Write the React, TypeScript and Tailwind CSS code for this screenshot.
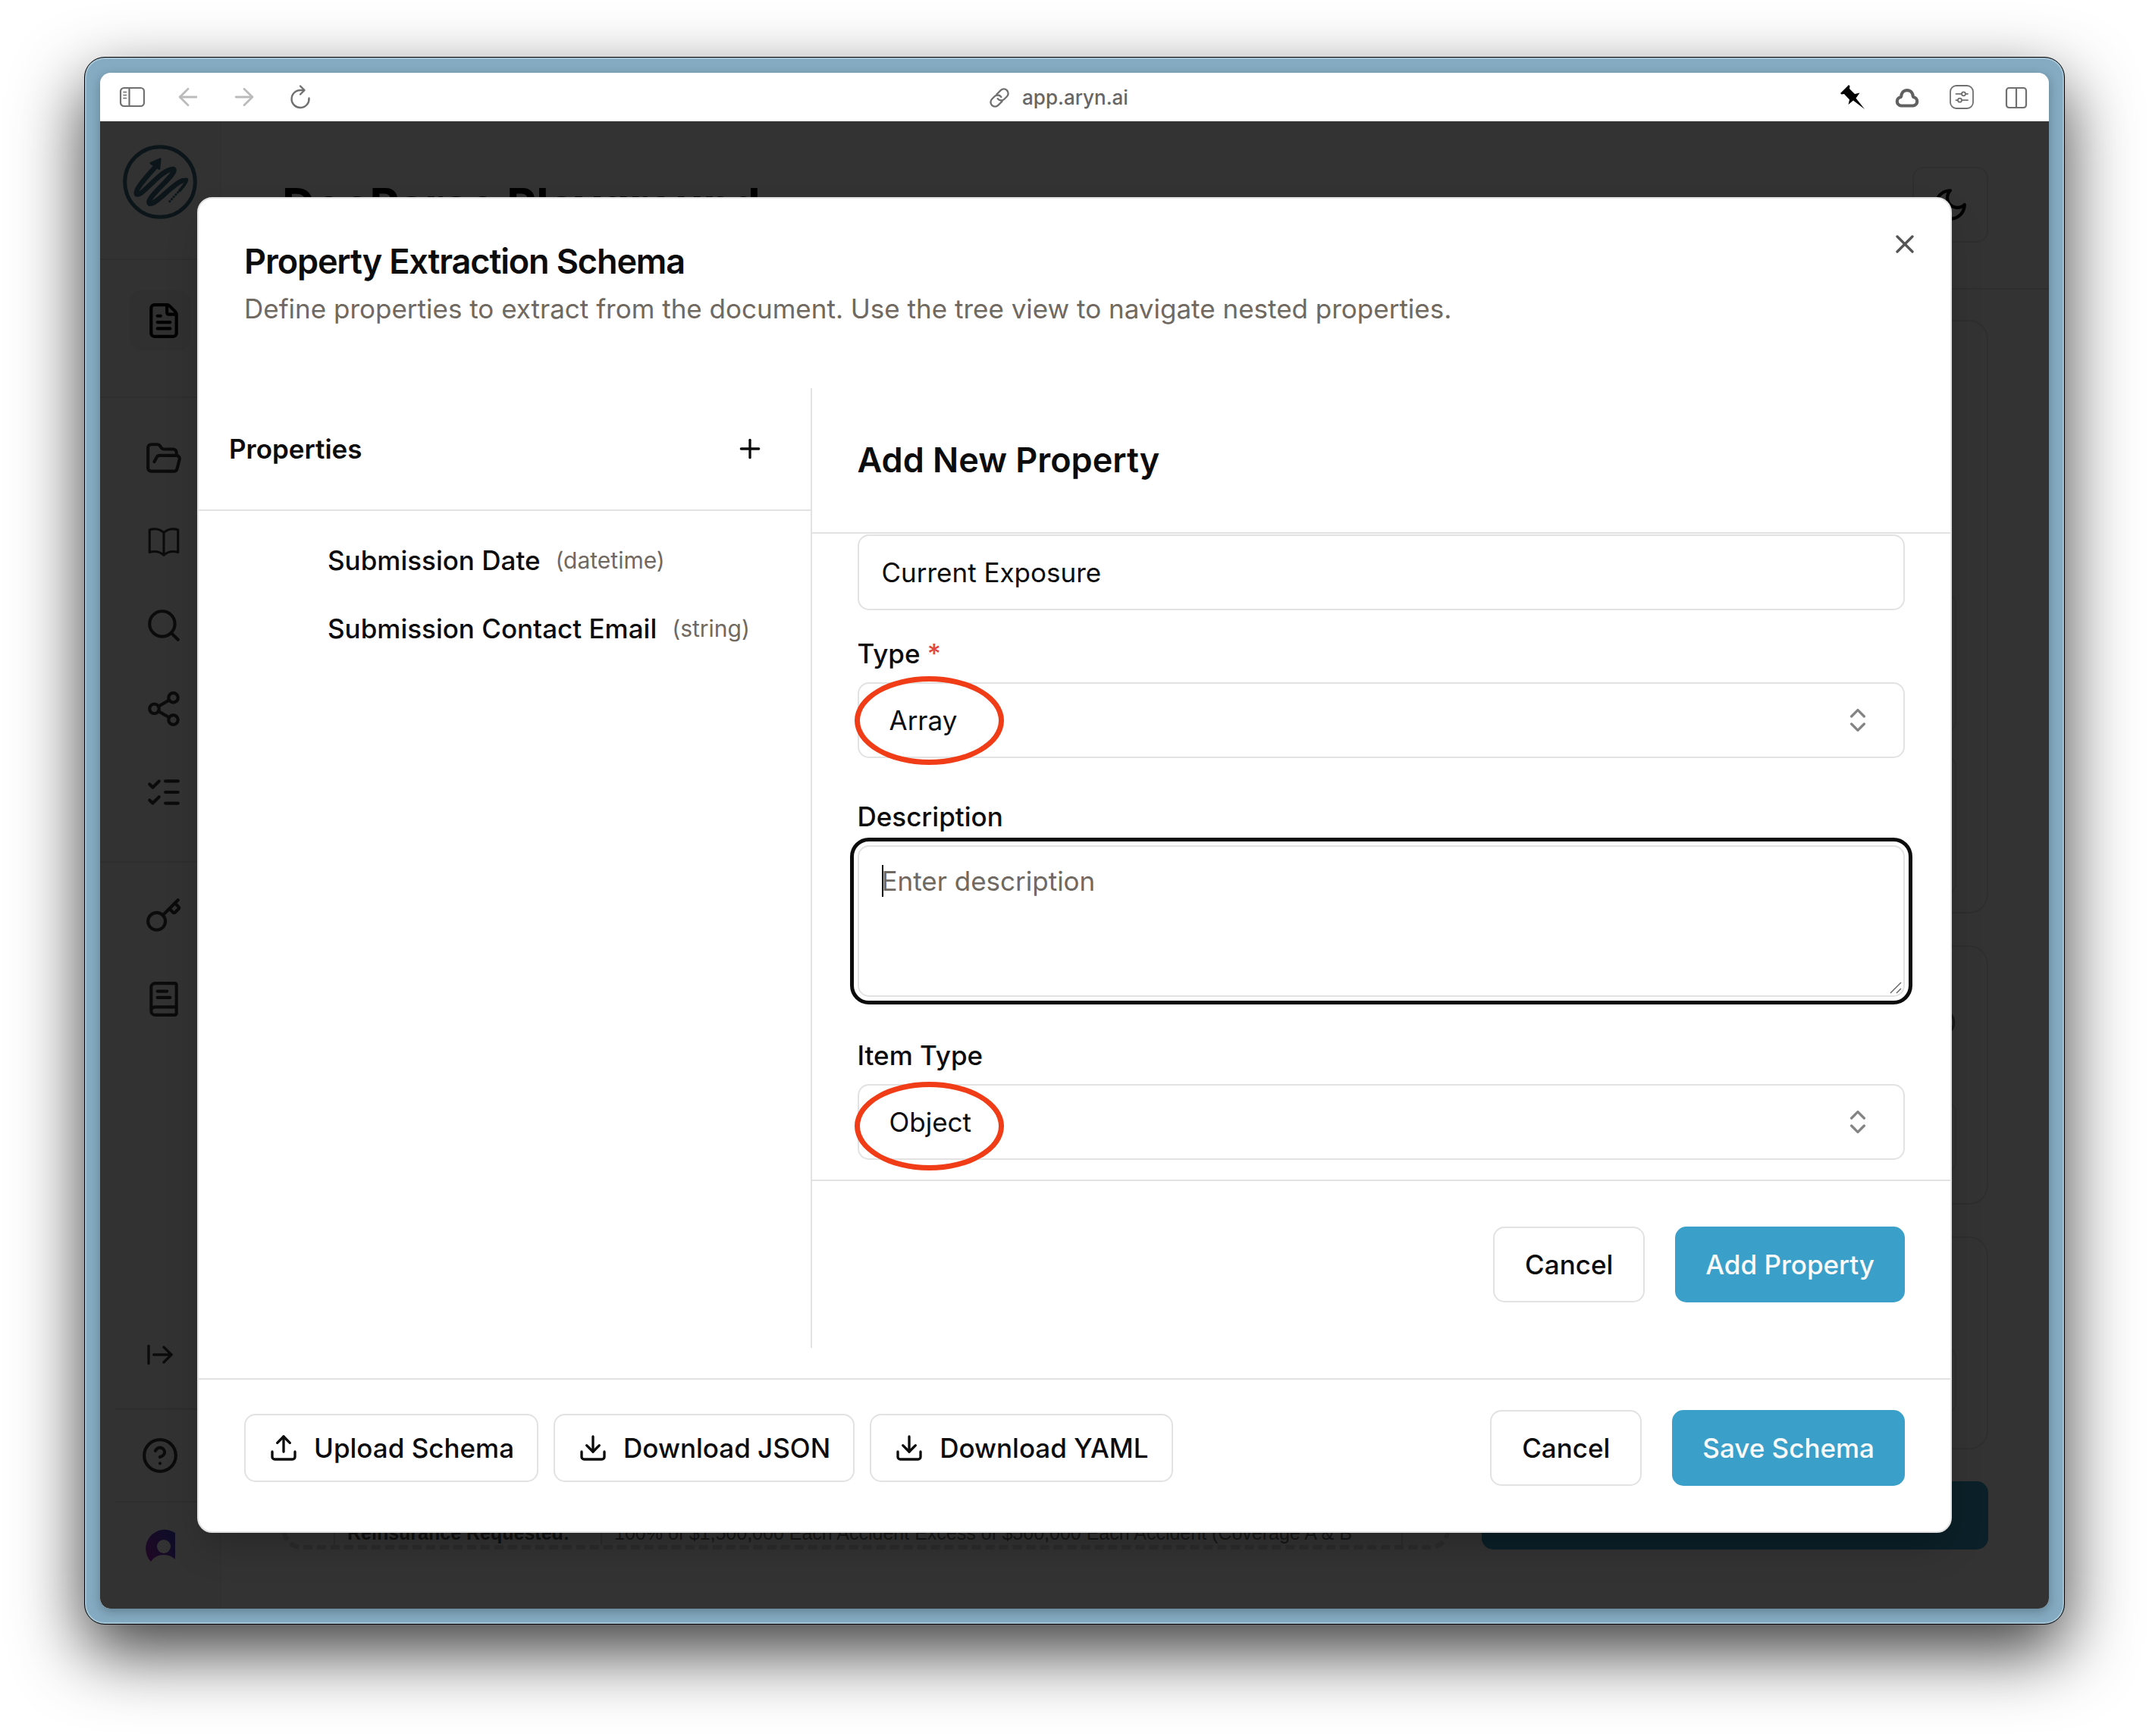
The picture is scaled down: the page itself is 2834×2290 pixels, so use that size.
import type { ReactNode } from "react";
import {
  ArrowLeft,
  ArrowRight,
  ArrowRightFromLine,
  BookText,
  ChevronsUpDown,
  CircleQuestionMark,
  Download,
  FileText,
  FolderOpen,
  Info,
  Key,
  ListChecks,
  Plus,
  Search,
  Share2,
  Upload,
  X,
} from "lucide-react";

const properties = [
  { name: "Submission Date", type: "(datetime)" },
  { name: "Submission Contact Email", type: "(string)" },
];

function BookOpenIcon() {
  return (
    <svg className="size-[50px] shrink-0" viewBox="0 0 24 24" fill="none" stroke="currentColor" strokeWidth="1.5" strokeLinecap="round" strokeLinejoin="round">
      <path d="M12 6.042A8.967 8.967 0 0 0 6 3.75c-1.052 0-2.062.18-3 .512v14.25A8.987 8.987 0 0 1 6 18c2.305 0 4.408.867 6 2.292m0-14.25a8.966 8.966 0 0 1 6-2.292c1.052 0 2.062.18 3 .512v14.25A8.987 8.987 0 0 0 18 18a8.967 8.967 0 0 0-6 2.292m0-14.25v14.25" />
    </svg>
  );
}

const libraryLinks = [
  { label: "Documents", icon: <FolderOpen className="size-[50px] shrink-0" /> },
  { label: "DocSets", icon: <BookOpenIcon /> },
  { label: "Search", icon: <Search className="size-[50px] shrink-0" /> },
  { label: "Share", icon: <Share2 className="size-[50px] shrink-0" /> },
  { label: "Tasks", icon: <ListChecks className="size-[50px] shrink-0" /> },
];

const accountLinks = [
  { label: "API keys", icon: <Key className="size-[50px] shrink-0" /> },
  { label: "Docs", icon: <BookText className="size-[50px] shrink-0" /> },
];

function NavLink({ label, active, children }: { label: string; active?: boolean; children: ReactNode }) {
  return (
    <a
      href="#"
      aria-label={label}
      className={
        active
          ? "flex size-20 items-center rounded-[15px] bg-[#f0f0f0] pl-5 text-black"
          : "flex size-20 items-center pl-5 text-[#393939]"
      }
    >
      {children}
    </a>
  );
}

function Logo() {
  return (
    <svg className="size-[98px]" viewBox="68 62 294 294" fill="none" stroke="#3c6b7d" strokeLinecap="round" strokeLinejoin="round">
      <circle cx="215" cy="209" r="139" strokeWidth="15" />
      <path strokeWidth="20" d="M196 150C172 178 114 238 122 257C142 272 222 154 268 158C290 174 150 276 174 295C200 300 262 218 304 204" />
      <path strokeWidth="12" d="M288 211C304 201 316 195 321 199C322 212 304 230 293 243" />
      <path strokeWidth="9" strokeDasharray="1 11" d="M286 250L246 294" />
      <path fill="#3c6b7d" strokeWidth="8" d="M178 135L216 118L212 157Z" />
    </svg>
  );
}

function Avatar() {
  return (
    <svg className="h-[50px] w-10 shrink-0" viewBox="0 0 40 50">
      <defs>
        <linearGradient id="avatar" x1="0" y1="1" x2="1" y2="0.3">
          <stop offset="0" stopColor="#a828b8" />
          <stop offset="1" stopColor="#4640c8" />
        </linearGradient>
      </defs>
      <path fill="url(#avatar)" d="M40 5A25 25 0 0 0 8 43C12 37 18 34 25 34C31 34 36 36 40 40Z" />
      <circle cx="25" cy="23" r="9" fill="#fafafa" />
    </svg>
  );
}

function BrowserBar() {
  return (
    <div className="flex h-16 items-center bg-white pr-[27px] pl-[25px] text-[#707070]">
      <div className="flex flex-1 items-center gap-10">
        <button aria-label="Sidebar">
          <svg className="size-[34px]" viewBox="0 0 34 34" fill="none" stroke="currentColor" strokeWidth="2.2" strokeLinecap="round">
            <rect x="2" y="5" width="31" height="24" rx="4.5" />
            <path d="M13.5 5v24" />
            <path strokeWidth="1.6" d="M6 10.5h3.5M6 14.5h3.5M6 18.5h3.5" />
          </svg>
        </button>
        <button aria-label="Back" className="text-[#bbbbbb]">
          <ArrowLeft className="size-[34px]" viewBox="1 1 22 22" strokeWidth={1.8} />
        </button>
        <button aria-label="Forward" className="text-[#bbbbbb]">
          <ArrowRight className="size-[34px]" viewBox="1 1 22 22" strokeWidth={1.8} />
        </button>
        <button aria-label="Reload">
          <svg className="size-[34px]" viewBox="0 0 34 34" fill="none" stroke="currentColor" strokeWidth="2.4" strokeLinecap="round" strokeLinejoin="round">
            <path d="M28.5 18.5A11.5 11.5 0 1 1 17 8H22" />
            <path d="M17 2.5L22.5 8L17 13.5" />
          </svg>
        </button>
      </div>
      <div className="flex items-center gap-4 pt-0.5 pr-10">
        <svg className="size-7" viewBox="0 0 24 24" fill="none" stroke="currentColor" strokeWidth="2" strokeLinecap="round">
          <path d="M10 13a5 5 0 0 0 7.54.54l3-3a5 5 0 0 0-7.07-7.07l-4.5 4.5" />
          <path d="M14 11a5 5 0 0 0-7.54-.54l-3 3a5 5 0 0 0 7.07 7.07l4.5-4.5" />
        </svg>
        <span className="text-[26px] leading-8 font-medium text-[#666666]">app.aryn.ai</span>
      </div>
      <div className="flex flex-1 items-center justify-end gap-10">
        <button aria-label="Pin">
          <svg className="size-8" viewBox="0 0 32 32" fill="#000000">
            <path d="M0 11L11 0L12.5 1.5L12 5L19 12L25.5 10.5L20.5 17.5L32 32L17 20.5L10.5 26L12 19.5L5 12L1.5 12.5Z" />
          </svg>
        </button>
        <button aria-label="Cloud">
          <svg className="size-8" viewBox="0 0 32 32" fill="none" stroke="#606060" strokeWidth="4.2" strokeLinejoin="round">
            <path d="M8 27.5A5.8 5.8 0 0 1 7.7 16C8.5 15.5 8.3 14.5 8.5 13A7.7 7.7 0 0 1 23.500 13C23.700 14.500 23.500 15.500 24.300 16A5.800 5.800 0 0 1 24 27.500Z" />
          </svg>
        </button>
        <button aria-label="Page settings">
          <svg className="size-8" viewBox="0 0 32 32" fill="none" stroke="currentColor" strokeWidth="1.8" strokeLinecap="round">
            <rect x="1" y="1" width="30" height="30" rx="8" />
            <path d="M8.5 11.8h7M21.5 11.8h2.5M8.5 20.2h2M16.5 20.2h7.5" />
            <circle cx="18.5" cy="11.8" r="2.5" />
            <circle cx="13.5" cy="20.2" r="2.5" />
          </svg>
        </button>
        <button aria-label="Split view">
          <svg className="size-8" viewBox="0 0 32 32" fill="none" stroke="currentColor" strokeWidth="2.2">
            <rect x="3" y="4" width="26" height="26" rx="3.5" />
            <path d="M16 4v26" />
          </svg>
        </button>
      </div>
    </div>
  );
}

function Sidebar() {
  return (
    <aside className="flex w-40 shrink-0 flex-col border-r-2 border-[#f2f2f2] bg-[#fafafa]">
      <div className="flex justify-center border-b-2 border-[#e5e5e5] pt-[31px] pb-[52px]">
        <Logo />
      </div>
      <nav className="flex flex-col">
        <div className="flex flex-col items-center border-b-2 border-[#e5e5e5] pt-10 pb-[60px]">
          <NavLink label="DocParse" active>
            <FileText className="size-[50px] shrink-0" />
          </NavLink>
        </div>
        <div className="flex flex-col items-center gap-[30px] border-b-2 border-[#e5e5e5] pt-10 pb-[51px]">
          {libraryLinks.map((link) => (
            <NavLink key={link.label} label={link.label}>
              {link.icon}
            </NavLink>
          ))}
        </div>
        <div className="flex flex-col items-center gap-[30px] pt-[30px]">
          {accountLinks.map((link) => (
            <NavLink key={link.label} label={link.label}>
              {link.icon}
            </NavLink>
          ))}
        </div>
      </nav>
      <div className="mt-auto flex flex-col items-center pb-10">
        <button aria-label="Expand" className="flex size-20 items-center justify-center text-[#393939]">
          <ArrowRightFromLine className="size-10" />
        </button>
        <div className="mt-[30px] w-full pl-5">
          <div className="border-t-[3px] border-[#e5e5e5]"></div>
        </div>
        <button aria-label="Help" className="my-5 flex size-20 items-center justify-center text-[#393939]">
          <CircleQuestionMark className="size-[50px]" />
        </button>
        <div className="w-full pl-5">
          <div className="border-t-2 border-[#e5e5e5]"></div>
        </div>
        <button aria-label="Account" className="mt-5 flex size-20 items-center pl-5">
          <Avatar />
        </button>
      </div>
    </aside>
  );
}

function Playground() {
  return (
    <main className="flex min-w-0 flex-1 flex-col">
      <header className="flex items-center justify-between border-b-2 border-[#e5e5e5] px-20 py-[60px]">
        <h1 className="text-[60px] leading-[75px] font-bold text-black">DocParse Playground</h1>
        <button aria-label="Toggle theme" className="flex size-[100px] items-center justify-center rounded-[15px] border-2 border-[#e5e5e5] text-black">
          <svg className="size-[50px]" viewBox="0 0 24 24" fill="none" stroke="currentColor" strokeWidth="2" strokeLinecap="round" strokeLinejoin="round">
            <path d="M12 3a6 6 0 0 0 9 9 9 9 0 1 1-9-9Z" />
          </svg>
        </button>
      </header>
      <div className="flex flex-1 gap-[42px] px-20 pt-10 pb-[78px]">
        <section className="flex min-w-0 flex-1 flex-col justify-end rounded-[25px] border-[6px] border-dashed border-[#dadada] pr-14 pl-[62px] font-['Liberation_Sans',sans-serif] text-[25px] leading-8">
          <table className="w-full border-collapse">
            <tbody>
              <tr>
                <th className="w-[352px] border-x-2 border-[#dadada] pl-4 text-left font-bold whitespace-nowrap text-[#505050]">Reinsurance Requested:</th>
                <td className="border-x-2 border-[#dadada] pl-4 whitespace-nowrap text-[#707070]">
                  100% of $1,500,000 Each Accident Excess of $500,000 Each Accident (Coverage A &amp; B
                </td>
              </tr>
            </tbody>
          </table>
        </section>
        <section className="flex w-[668px] shrink-0 flex-col gap-[42px]">
          <div className="flex flex-1 flex-col justify-end gap-[29px] rounded-[25px] border-2 border-[#e5e5e5] px-10 pb-[22px]">
            <div className="h-[185px] rounded-[15px] border-2 border-[#e5e5e5]"></div>
            <div className="h-[185px] rounded-[15px] border-2 border-[#e5e5e5]"></div>
          </div>
          <div className="flex flex-col items-end rounded-[25px] border-2 border-[#e5e5e5] px-10 pt-20 pb-10">
            <Info className="size-10 text-stone-500" />
            <div className="mt-[84px] h-[94px] w-full rounded-[15px] border-2 border-[#e5e5e5]"></div>
          </div>
          <div className="rounded-[25px] border-2 border-[#e5e5e5] px-10 pt-[143px] pb-11">
            <div className="h-[90px] rounded-[15px] border-2 border-[#e5e5e5]"></div>
          </div>
          <div className="h-[90px] rounded-[15px] bg-[#3aa0c9]"></div>
        </section>
      </div>
    </main>
  );
}

const fieldClass = "h-[100px] w-full rounded-[15px] border-2 border-[#e2e2e2] bg-white text-[35px] leading-[50px] text-[#0c0c0c]";
const labelClass = "text-[35px] leading-[35px] font-medium";
const outlineButton = "h-[100px] rounded-[15px] border-2 border-[#e2e2e2] bg-white px-10 font-medium";
const primaryButton = "h-[100px] rounded-[15px] bg-[#3aa0c9] px-10 font-medium text-[#fafafa]";
const toolButton = "flex h-[90px] items-center gap-5 rounded-[15px] border-2 border-[#e2e2e2] bg-white px-[30px] font-medium";

function Marker({ className }: { className: string }) {
  return <span className={`pointer-events-none absolute -left-1 h-[117px] w-[197px] rounded-[50%] border-[7px] border-[#f03c17] ${className}`}></span>;
}

function SelectField({ id, value, marker }: { id: string; value: string; marker: string }) {
  return (
    <div className="relative">
      <select id={id} className={`${fieldClass} appearance-none px-10`}>
        <option>{value}</option>
      </select>
      <ChevronsUpDown className="pointer-events-none absolute top-[30px] right-[42px] size-10 text-[#0c0c0c] opacity-50" />
      <Marker className={marker} />
    </div>
  );
}

function PropertyForm() {
  return (
    <div className="flex min-w-0 flex-1 flex-col">
      <div className="border-b-2 border-[#e2e2e2] p-[60px]">
        <h3 className="text-[45px] leading-[70px] font-semibold">Add New Property</h3>
      </div>
      <div className="flex flex-1 flex-col px-[60px] pt-px">
        <input aria-label="Name" defaultValue="Current Exposure" className={`${fieldClass} px-[30px]`} />
        <div className="mt-10 flex flex-col gap-5">
          <label htmlFor="type" className={labelClass}>
            Type <span className="text-[#e2483d]">*</span>
          </label>
          <SelectField id="type" value="Array" marker="-top-2" />
        </div>
        <div className="mt-[60px] flex flex-col gap-5">
          <label htmlFor="description" className={labelClass}>
            Description
          </label>
          <div className="relative h-[200px]">
            <textarea
              id="description"
              placeholder="Enter description"
              className="block size-full resize-none rounded-[15px] border-2 border-[#e2e2e2] px-[30px] py-5 text-[35px] leading-[50px] outline-[5px] outline-offset-[5px] outline-[#0c0c0c] placeholder:text-[#6f6962]"
            />
            <span className="pointer-events-none absolute top-[26px] left-8 h-[42px] w-0.5 bg-[#0c0c0c]"></span>
            <svg className="pointer-events-none absolute right-1 bottom-1 size-4" viewBox="0 0 16 16" stroke="#606060" strokeWidth="1.4">
              <path d="M1 15L15 1M9 15L15 9" />
            </svg>
          </div>
        </div>
        <div className="mt-[60px] flex flex-col gap-5">
          <label htmlFor="item-type" className={labelClass}>
            Item Type
          </label>
          <SelectField id="item-type" value="Object" marker="-top-[3px]" />
        </div>
      </div>
      <div className="flex justify-end gap-10 border-t-2 border-[#e2e2e2] p-[60px]">
        <button className={outlineButton}>Cancel</button>
        <button className={primaryButton}>Add Property</button>
      </div>
    </div>
  );
}

function SchemaDialog() {
  return (
    <div role="dialog" aria-labelledby="schema-title" className="relative flex flex-1 flex-col rounded-[20px] border-2 border-[#e2e2e2] bg-white text-[35px] leading-[50px] text-[#0c0c0c] shadow-2xl">
      <button aria-label="Close" className="absolute top-10 right-10 opacity-70">
        <X className="size-10" />
      </button>

      <div className="flex flex-col gap-[15px] p-[60px]">
        <h2 id="schema-title" className="text-[45px] leading-[45px] font-semibold tracking-tight">
          Property Extraction Schema
        </h2>
        <p className="text-[#6f6962]">Define properties to extract from the document. Use the tree view to navigate nested properties.</p>
      </div>

      <div className="mt-5 mb-10 flex flex-1">
        <div className="w-[35%] shrink-0 border-r-2 border-[#e2e2e2]">
          <div className="flex items-center justify-between border-b-2 border-[#e2e2e2] p-10">
            <h3 className="font-semibold">Properties</h3>
            <button aria-label="Add property" className="flex size-20 items-center justify-center">
              <Plus className="size-10" />
            </button>
          </div>
          <ul className="p-5">
            {properties.map((property) => (
              <li key={property.name} className="flex items-center gap-5 py-5 pl-[150px] whitespace-nowrap">
                <span className="font-medium">{property.name}</span>
                <span className="text-[30px] text-[#6f6962]">{property.type}</span>
              </li>
            ))}
          </ul>
        </div>
        <PropertyForm />
      </div>

      <div className="flex items-center justify-between border-t-2 border-[#e2e2e2] px-[60px] pt-10 pb-[60px]">
        <div className="flex gap-5">
          <button className={toolButton}>
            <Upload className="size-10" />
            Upload Schema
          </button>
          <button className={toolButton}>
            <Download className="size-10" />
            Download JSON
          </button>
          <button className={toolButton}>
            <Download className="size-10" />
            Download YAML
          </button>
        </div>
        <div className="flex gap-10">
          <button className={outlineButton}>Cancel</button>
          <button className={primaryButton}>Save Schema</button>
        </div>
      </div>
    </div>
  );
}

export default function App() {
  return (
    <div className="flex min-h-screen bg-white px-[111px] pt-[75px] pb-[147px] font-[Inter,sans-serif]">
      {/* browser window */}
      <div className="flex flex-1 rounded-[27px] border border-black bg-[#84abc2] p-5 shadow-[0_36px_90px_rgba(0,0,0,0.76),inset_0_0_0_2px_#a3c3d4]">
        <div className="flex min-w-0 flex-1 flex-col overflow-hidden rounded-[14px] shadow-[0_4px_14px_rgba(0,0,0,0.25)]">
          <BrowserBar />
          <div className="relative flex flex-1 bg-white">
            <Sidebar />
            <Playground />
            {/* dialog over the dimmed page */}
            <div className="absolute inset-0 flex bg-black/80 px-32 py-[100px]">
              <SchemaDialog />
            </div>
          </div>
        </div>
      </div>
    </div>
  );
}
